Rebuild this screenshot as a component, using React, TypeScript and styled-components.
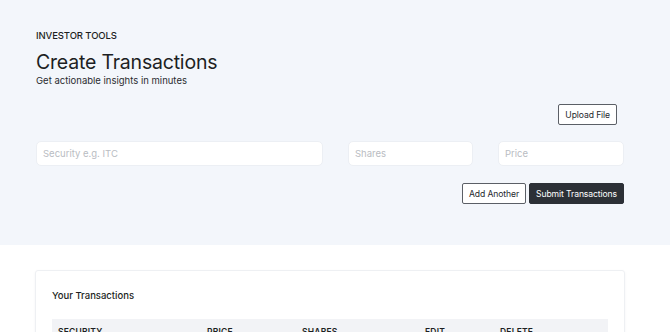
import React from "react";
import styled, { createGlobalStyle } from "styled-components";

const GlobalStyle = createGlobalStyle`
  * { box-sizing: border-box; }
  body {
    margin: 0;
    font-family: Inter, "Noto Sans", sans-serif;
    color: #1d1f23;
    background: #ffffff;
  }
`;

const columns = ["Security", "Price", "Shares", "Edit", "Delete"];

const App = () => {
  return (
    <>
      <GlobalStyle />
      <Page>
        <Hero>
          <Eyebrow>INVESTOR TOOLS</Eyebrow>
          <Title>Create Transactions</Title>
          <Subtitle>Get actionable insights in minutes</Subtitle>
          <UploadRow>
            <OutlineButton>Upload File</OutlineButton>
          </UploadRow>
          <InputGrid>
            <Field placeholder="Security e.g. ITC" />
            <Field placeholder="Shares" />
            <Field placeholder="Price" />
          </InputGrid>
          <ActionRow>
            <OutlineButton>Add Another</OutlineButton>
            <DarkButton>Submit Transactions</DarkButton>
          </ActionRow>
        </Hero>
        <Body>
          <Card>
            <CardTitle>Your Transactions</CardTitle>
            <TableHead>
              {columns.map((c) => (
                <HeadCell key={c}>{c}</HeadCell>
              ))}
            </TableHead>
          </Card>
        </Body>
      </Page>
    </>
  );
};

const Page = styled.div`
  width: 670px;
  height: 332px;
  overflow: hidden;
`;

const Hero = styled.section`
  background-color: #f3f6fb;
  height: 245px;
  padding: 29px 46px 0 36px;
`;

const Eyebrow = styled.div`
  font-size: 9.5px;
  font-weight: 500;
  letter-spacing: -0.1px;
  line-height: 14px;
`;

const Title = styled.h1`
  margin: 7px 0 0;
  font-size: 19.5px;
  font-weight: 400;
  line-height: 24px;
  letter-spacing: -0.2px;
`;

const Subtitle = styled.p`
  margin: 0;
  font-size: 9.5px;
  line-height: 13px;
  color: #2a2c30;
`;

const UploadRow = styled.div`
  display: flex;
  justify-content: flex-end;
  padding-right: 7px;
  margin-top: 17px;
`;

const InputGrid = styled.div`
  display: grid;
  grid-template-columns: 287px 125px 126px;
  column-gap: 25px;
  margin-top: 16px;
`;

const Field = styled.input`
  height: 25px;
  border: 1px solid #eceff4;
  border-radius: 5px;
  background: #ffffff;
  padding: 0 6px;
  font-family: inherit;
  font-size: 9.5px;
  outline: none;
  &::placeholder {
    color: #b9bcc2;
  }
`;

const ActionRow = styled.div`
  display: flex;
  justify-content: flex-end;
  gap: 3px;
  margin-top: 17px;
`;

const OutlineButton = styled.button`
  height: 21px;
  padding: 0 6px;
  border: 1px solid #5b5f66;
  border-radius: 2px;
  background: #ffffff;
  color: #25282d;
  font-family: inherit;
  font-size: 8.6px;
  letter-spacing: -0.1px;
  cursor: pointer;
`;

const DarkButton = styled(OutlineButton)`
  background: #2c3036;
  border-color: #2c3036;
  color: #ffffff;
`;

const Body = styled.section`
  padding: 25px 45px 0 35px;
`;

const Card = styled.div`
  border: 1px solid #eef0f3;
  border-radius: 3px;
  box-shadow: 0 1px 3px rgba(20, 30, 50, 0.05);
  padding: 18px 16px 0 16px;
  height: 120px;
`;

const CardTitle = styled.h3`
  margin: 0;
  font-size: 9.5px;
  font-weight: 500;
  line-height: 14px;
`;

const TableHead = styled.div`
  display: grid;
  grid-template-columns: 149px 95px 123px 75px 1fr;
  margin-top: 16px;
  background-color: #f2f3f6;
  padding: 8px 6px;
`;

const HeadCell = styled.div`
  font-size: 8.5px;
  font-weight: 600;
  text-transform: uppercase;
  letter-spacing: 0.2px;
`;

export default App;
